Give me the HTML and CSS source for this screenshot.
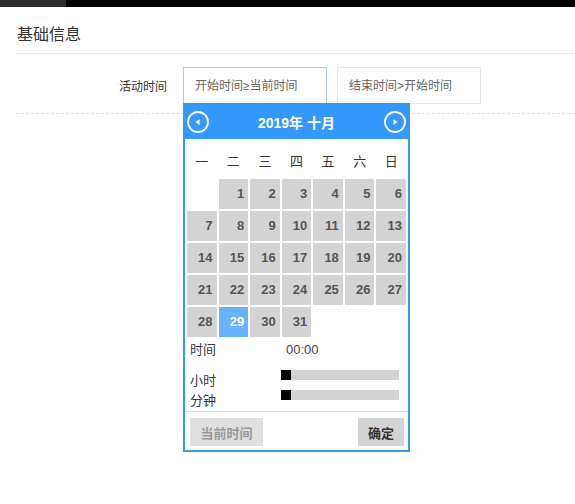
FILE: index.html
```html
<!DOCTYPE html>
<html lang="zh-CN">
<head>
<meta charset="utf-8">
<title>基础信息</title>
<link rel="stylesheet" href="styles.css">
</head>
<body>
<div class="page">
<div class="topbar"><div class="topbar-tab"></div></div>
<div class="section">
  <div class="section-title">基础信息</div>
  <div class="form-row">
    <label class="form-label">活动时间</label>
    <div class="field">
      <input class="text-input focused" placeholder="开始时间≥当前时间">
      <div class="calendar">
        <div class="cal-head">
          <span class="cal-nav">
            <svg width="22" height="22" viewBox="0 0 22 22"><circle cx="11" cy="11" r="10" fill="none" stroke="#fff" stroke-width="1.8"/><polygon points="12.5,8 8.5,11 12.5,14" fill="#fff"/></svg>
          </span>
          <span class="cal-title">2019年 十月</span>
          <span class="cal-nav">
            <svg width="22" height="22" viewBox="0 0 22 22"><circle cx="11" cy="11" r="10" fill="none" stroke="#fff" stroke-width="1.8"/><polygon points="9.5,8 13.5,11 9.5,14" fill="#fff"/></svg>
          </span>
        </div>
        <div class="cal-week">
          <span>一</span><span>二</span><span>三</span><span>四</span><span>五</span><span>六</span><span>日</span>
        </div>
        <div class="cal-days">
          <span class="day empty"></span>
          <span class="day">1</span><span class="day">2</span><span class="day">3</span><span class="day">4</span><span class="day">5</span><span class="day">6</span>
          <span class="day">7</span><span class="day">8</span><span class="day">9</span><span class="day">10</span><span class="day">11</span><span class="day">12</span><span class="day">13</span>
          <span class="day">14</span><span class="day">15</span><span class="day">16</span><span class="day">17</span><span class="day">18</span><span class="day">19</span><span class="day">20</span>
          <span class="day">21</span><span class="day">22</span><span class="day">23</span><span class="day">24</span><span class="day">25</span><span class="day">26</span><span class="day">27</span>
          <span class="day">28</span><span class="day selected">29</span><span class="day">30</span><span class="day">31</span>
        </div>
        <div class="cal-time">
          <div class="time-row">
            <span class="time-label">时间</span>
            <span class="time-value">00:00</span>
          </div>
          <div class="slider-row">
            <span class="slider-label">小时</span>
            <div class="slider"><div class="handle"></div></div>
          </div>
          <div class="slider-row">
            <span class="slider-label">分钟</span>
            <div class="slider"><div class="handle"></div></div>
          </div>
        </div>
        <div class="cal-foot">
          <button class="btn btn-now">当前时间</button>
          <button class="btn btn-ok">确定</button>
        </div>
      </div>
    </div>
    <div class="field">
      <input class="text-input" placeholder="结束时间>开始时间">
    </div>
  </div>
  <div class="dashed"></div>
</div>
</div>
</body>
</html>
```

FILE: styles.css
```css
* { box-sizing: border-box; }
html, body {
  margin: 0;
  padding: 0;
  background: #fff;
  font-family: "Liberation Sans", "Noto Sans CJK SC", sans-serif;
  color: #333;
}
.page {
  min-height: 504px;
}
.topbar {
  height: 7px;
  background: #000;
}
.topbar-tab {
  width: 66px;
  height: 7px;
  background: #2b2b2b;
}
.section {
  margin-left: 16px;
}
.section-title {
  padding: 18px 0 8px 1px;
  font-size: 16px;
  line-height: 20px;
  color: #333;
  border-bottom: 1px solid #e5e5e5;
}
.form-row {
  display: flex;
  align-items: center;
  margin-top: 13px;
  height: 37px;
}
.form-label {
  width: 151px;
  text-align: right;
  font-size: 12px;
  color: #333;
  margin-right: 16px;
}
.field {
  position: relative;
  margin-right: 10px;
}
.text-input {
  display: block;
  width: 144px;
  height: 37px;
  border: 1px solid #e6e6e6;
  padding: 0 0 0 11px;
  font-family: "Liberation Sans", "Noto Sans CJK SC", sans-serif;
  font-size: 12px;
  color: #333;
  outline: none;
  background: #fff;
}
.text-input::placeholder { color: #666; }
.text-input.focused { border-color: #a6c8ff; }
.dashed {
  margin-top: 9px;
  border-bottom: 1px dashed #e0e0e0;
}

/* calendar popup */
.calendar {
  position: absolute;
  left: 0;
  top: 36px;
  z-index: 5;
  width: 227px;
  border: 2px solid #3399ff;
  border-top-width: 0;
  background: #fff;
}
.cal-head {
  height: 36px;
  background: #3399ff;
  display: flex;
  align-items: center;
  justify-content: space-between;
  margin: 0 -2px;
  padding: 1px 4px 0 4px;
}
.cal-nav { width: 22px; height: 22px; display: block; }
.cal-nav svg { display: block; }
.cal-title {
  color: #fff;
  font-weight: bold;
  font-size: 14px;
}
.cal-week {
  display: grid;
  grid-template-columns: repeat(7, 1fr);
  column-gap: 2px;
  padding: 0 2px;
  height: 38px;
  align-items: center;
  font-size: 13px;
  color: #333;
  text-align: center;
}
.cal-week span { padding-top: 4px; }
.cal-days {
  display: grid;
  grid-template-columns: repeat(7, 1fr);
  grid-auto-rows: 30px;
  gap: 2px;
  padding: 2px;
}
.day {
  background: #d3d3d3;
  color: #555;
  font-weight: bold;
  font-size: 13px;
  line-height: 30px;
  text-align: right;
  padding-right: 4px;
}
.day.empty { background: transparent; }
.day.selected { background: #66b3ff; color: #fff; }

.cal-time {
  padding: 3px 0 1px 5px;
  font-size: 13px;
  color: #333;
}
.time-row {
  display: flex;
  height: 28px;
  line-height: 16px;
}
.time-label { width: 96px; }
.time-value { color: #444; }
.slider-row {
  display: flex;
  height: 20px;
}
.slider-label {
  width: 91px;
  line-height: 16px;
  margin-top: 3px;
}
.slider {
  width: 118px;
  height: 10px;
  background: #d3d3d3;
}
.handle {
  width: 10px;
  height: 10px;
  background: #000;
}
.cal-foot {
  border-top: 1px solid #ddd;
  display: flex;
  justify-content: space-between;
  padding: 6px 4px 4px 5px;
}
.btn {
  border: none;
  height: 28px;
  padding: 0 10px;
  font-family: "Liberation Sans", "Noto Sans CJK SC", sans-serif;
  font-size: 13px;
  font-weight: bold;
  cursor: pointer;
}
.btn-now { background: #dfdfdf; color: #999; width: 73px; }
.btn-ok { background: #d3d3d3; color: #333; width: 46px; }
```
